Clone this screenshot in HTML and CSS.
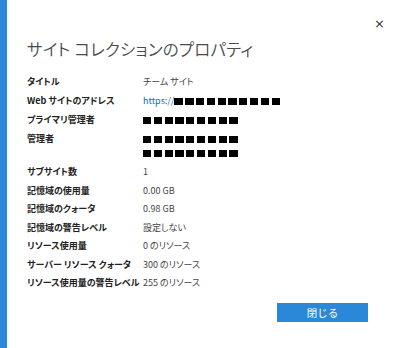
FILE: index.html
```html
<!DOCTYPE html>
<html lang="ja">
<head>
<meta charset="utf-8">
<title>サイト コレクションのプロパティ</title>
<link rel="stylesheet" href="styles.css">
</head>
<body>
<div class="dialog">
  <div class="bar"></div>
  <div class="main">
    <div class="topbar"><span class="close">×</span></div>
    <h1 class="title">サイト コレクションのプロパティ</h1>
    <div class="props">
      <div class="label">タイトル</div>
      <div class="value">チーム サイト</div>

      <div class="label">Web サイトのアドレス</div>
      <div class="value"><span class="link">https://</span><span class="redact"><i></i><i></i><i></i><i></i><i></i><i></i><i></i><i></i><i></i><i></i></span></div>

      <div class="label">プライマリ管理者</div>
      <div class="value"><span class="redact"><i></i><i></i><i></i><i></i><i></i><i></i><i></i><i></i><i></i></span></div>

      <div class="label">管理者</div>
      <div class="value"><span class="redact"><i></i><i></i><i></i><i></i><i></i><i></i><i></i><i></i><i></i></span><br><span class="redact"><i></i><i></i><i></i><i></i><i></i><i></i><i></i><i></i><i></i></span></div>

      <div class="label">サブサイト数</div>
      <div class="value">1</div>

      <div class="label">記憶域の使用量</div>
      <div class="value">0.00 GB</div>

      <div class="label">記憶域のクォータ</div>
      <div class="value">0.98 GB</div>

      <div class="label">記憶域の警告レベル</div>
      <div class="value">設定しない</div>

      <div class="label">リソース使用量</div>
      <div class="value">0 のリソース</div>

      <div class="label">サーバー リソース クォータ</div>
      <div class="value">300 のリソース</div>

      <div class="label">リソース使用量の警告レベル</div>
      <div class="value">255 のリソース</div>
    </div>
    <div class="actions"><button class="btn">閉じる</button></div>
  </div>
</div>
</body>
</html>
```
FILE: styles.css
```css
html, body {
  margin: 0;
  padding: 0;
  background: #ffffff;
}
body {
  font-family: "Noto Sans CJK JP", "Noto Sans", sans-serif;
  font-feature-settings: "palt";
}
.dialog {
  display: flex;
  width: 407px;
  height: 348px;
}
.bar {
  width: 7px;
  background: #2b88d8;
  flex: none;
}
.main {
  flex: 1;
  padding: 16px 22px 0 20px;
}
.topbar {
  display: flex;
  justify-content: flex-end;
  height: 16px;
}
.close {
  font-size: 13px;
  line-height: 16px;
  color: #333;
  font-family: "DejaVu Sans", sans-serif;
}
.title {
  margin: 6px 0 0 0;
  font-size: 16.5px;
  line-height: 22px;
  font-weight: 350;
  color: #4a4a4a;
  letter-spacing: 0.2px;
}
.props {
  display: grid;
  grid-template-columns: 116px auto;
  row-gap: 4.5px;
  margin-top: 15px;
  font-size: 9px;
  line-height: 14px;
}
.label {
  color: #222;
  font-weight: 600;
}
.value {
  color: #444;
}
.link {
  color: #0072c6;
}
.redact {
  display: inline-flex;
  gap: 2.5px;
  vertical-align: -1px;
  height: 14px;
  align-items: center;
}
.redact i {
  display: block;
  width: 8.3px;
  height: 7px;
  background: #000;
}
.actions {
  display: flex;
  justify-content: flex-end;
  margin-top: 13px;
  padding-right: 17px;
}
.btn {
  width: 91px;
  height: 19px;
  border: none;
  background: #2b88d8;
  color: #fff;
  font-family: "Noto Sans CJK JP", sans-serif;
  font-size: 10.5px;
  padding: 0;
}
```
